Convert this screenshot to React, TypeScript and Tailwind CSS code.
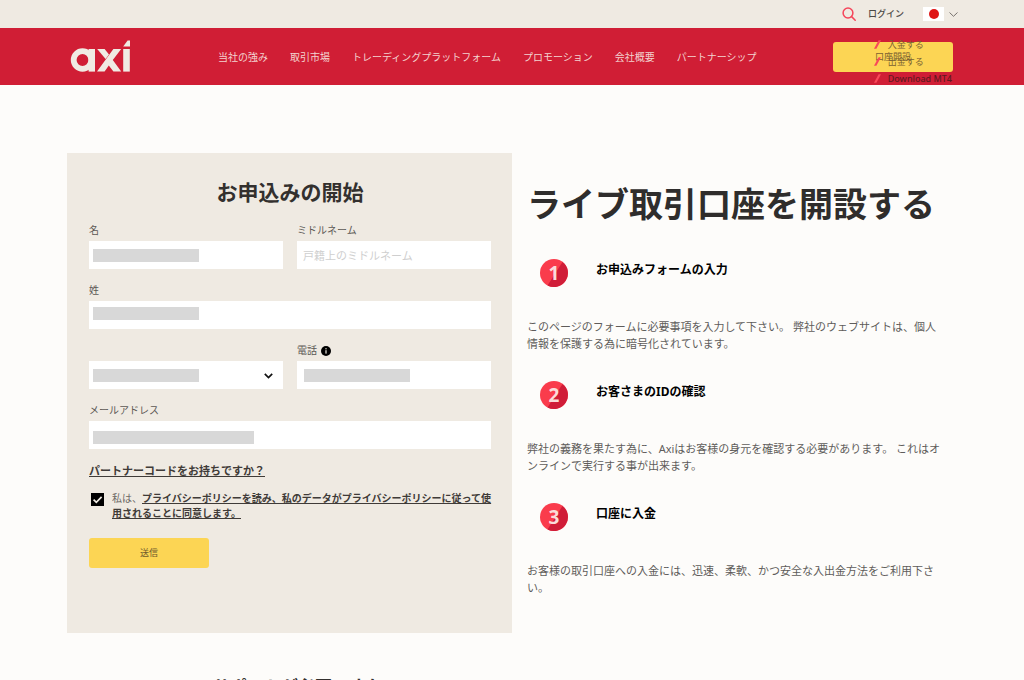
import { useState } from 'react'
import type { ReactNode } from 'react'

interface Step {
  no: number
  title: string
  lines: string[]
}

const NAV_ITEMS = [
  '当社の強み',
  '取引市場',
  'トレーディングプラットフォーム',
  'プロモーション',
  '会社概要',
  'パートナーシップ',
]

const QUICK_LINKS = ['入金する', '出金する', 'Download MT4']

const STEPS: Step[] = [
  {
    no: 1,
    title: 'お申込みフォームの入力',
    lines: [
      'このページのフォームに必要事項を入力して下さい。 弊社のウェブサイトは、個人',
      '情報を保護する為に暗号化されています。',
    ],
  },
  {
    no: 2,
    title: 'お客さまのIDの確認',
    lines: [
      '弊社の義務を果たす為に、Axiはお客様の身元を確認する必要があります。 これはオ',
      'ンラインで実行する事が出来ます。',
    ],
  },
  {
    no: 3,
    title: '口座に入金',
    lines: ['お客様の取引口座への入金には、迅速、柔軟、かつ安全な入出金方法をご利用下さ', 'い。'],
  },
]

const INPUT_CLASS =
  'block h-7 w-full rounded-none border-0 bg-white px-[6px] text-[11px] text-[#333] outline-none placeholder:text-[#cfcfcf]'

function Logo() {
  return (
    <svg className="block h-[33px] w-[61px]" viewBox="0 0 61 33" fill="#f0ebe3" aria-label="axi" role="img">
      <circle cx="12.5" cy="20" r="8.8" fill="none" stroke="#f0ebe3" strokeWidth="5.8" />
      <rect x="18.6" y="9" width="6.4" height="22.6" />
      <polygon points="27.2,9 34.6,9 39,14.6 35.6,19" />
      <polygon points="43.4,9 51.2,9 42.8,20 51.2,31.6 43.4,31.6 38.8,25.4 34.6,31.6 27,31.6" />
      <rect x="53.2" y="9" width="6.6" height="22.6" />
      <polygon points="57.6,0.4 60,0.4 60,6.6 53.2,6.6" />
    </svg>
  )
}

function TopBar() {
  return (
    <div className="flex h-7 items-center justify-end bg-[#efeae2] pr-[66px]">
      <button type="button" aria-label="検索">
        <svg className="block size-[14px]" viewBox="0 0 14 14" fill="none" stroke="#f5455a" strokeWidth="1.5" strokeLinecap="round">
          <circle cx="6" cy="6" r="4.9" />
          <path d="M9.6 9.6 13.2 13.2" />
        </svg>
      </button>
      <a href="#login" className="ml-3 text-[9px] font-medium text-[#4a4744]">
        ログイン
      </a>
      <button type="button" aria-label="日本語" className="ml-[19px] flex items-center gap-[5px]">
        <span className="flex h-[14px] w-[21px] items-center justify-center bg-white">
          <span className="size-[10px] rounded-full bg-[#df1414]" />
        </span>
        <svg className="block h-[5px] w-[9px]" viewBox="0 0 9 5" fill="none" stroke="#77736f" strokeWidth="1">
          <path d="M0.5 0.5 4.5 4.3 8.5 0.5" />
        </svg>
      </button>
    </div>
  )
}

function Header() {
  return (
    <header className="relative flex h-[57px] items-center bg-[#d01e35] pr-[71px] pl-[70px]">
      <a href="#top">
        <Logo />
      </a>
      <nav className="ml-[87px] flex gap-[22px] pt-px text-[10px] whitespace-nowrap text-[#f3d3d0]">
        {NAV_ITEMS.map(item => (
          <a key={item} href="#nav">
            {item}
          </a>
        ))}
      </nav>
      <button type="button" className="ml-auto h-[30px] w-[120px] rounded-[3px] bg-[#fcd554] text-[9px] text-[#7a5f31]">
        口座開設
      </button>

      {/* ボタンに重なるリンク一覧 */}
      <ul className="absolute top-2 right-[72px] text-[9px] leading-[17px]">
        {QUICK_LINKS.map(link => (
          <li key={link} className="flex items-center gap-[7px]">
            <svg className="block h-[9px] w-[7px]" viewBox="0 0 7 9" fill="#f9485a">
              <polygon points="4.6,0.3 7,0.3 2.4,8.7 0,8.7" />
            </svg>
            <a
              href="#quick"
              className={link === 'Download MT4' ? 'font-medium text-[#5f1a20]' : 'text-[#7a5f31]'}
            >
              {link}
            </a>
          </li>
        ))}
      </ul>
    </header>
  )
}

interface FieldProps {
  id: string
  label: ReactNode
  mask?: string
  children: ReactNode
}

function Field({ id, label, mask, children }: FieldProps) {
  return (
    <div className="min-w-0 flex-1">
      <label htmlFor={id} className="flex h-[21px] items-center gap-1 text-[10px] text-[#5c5855]">
        {label}
      </label>
      <div className="relative">
        {children}
        {mask && <span className={`pointer-events-none absolute h-[13px] bg-[#d8d8d8] ${mask}`} />}
      </div>
    </div>
  )
}

function InfoIcon() {
  return (
    <svg className="block size-[10px]" viewBox="0 0 10 10">
      <circle cx="5" cy="5" r="5" fill="#000" />
      <rect x="4.4" y="4.2" width="1.2" height="3.4" fill="#efeae2" />
      <circle cx="5" cy="2.8" r="0.7" fill="#efeae2" />
    </svg>
  )
}

function ApplyForm() {
  const [agreed, setAgreed] = useState(true)

  return (
    <form className="bg-[#efeae2] pt-6 pr-[21px] pb-[65px] pl-[22px]" onSubmit={e => e.preventDefault()}>
      <h2 className="mb-[13px] text-center text-[21px] leading-[30px] font-bold text-[#33302e]">お申込みの開始</h2>

      <div className="flex flex-col gap-[11px]">
        <div className="flex gap-[14px]">
          <Field id="first" label="名" mask="left-1 top-2 w-[106px]">
            <input id="first" type="text" className={INPUT_CLASS} />
          </Field>
          <Field id="middle" label="ミドルネーム">
            <input id="middle" type="text" placeholder="戸籍上のミドルネーム" className={INPUT_CLASS} />
          </Field>
        </div>
        <Field id="last" label="姓" mask="left-1 top-[6px] w-[106px]">
          <input id="last" type="text" className={INPUT_CLASS} />
        </Field>
        <div className="flex gap-[14px]">
          <Field id="country" label="" mask="left-1 top-2 w-[106px]">
            <select id="country" aria-label="国" className={`${INPUT_CLASS} appearance-none`} />
            <svg
              className="pointer-events-none absolute top-3 right-[10px] h-[6px] w-[9px]"
              viewBox="0 0 9 6"
              fill="none"
              stroke="#111"
              strokeWidth="1.7"
            >
              <path d="M0.8 0.8 4.5 4.5 8.2 0.8" />
            </svg>
          </Field>
          <Field
            id="phone"
            label={
              <>
                電話
                <InfoIcon />
              </>
            }
            mask="left-[7px] top-2 w-[106px]"
          >
            <input id="phone" type="tel" className={INPUT_CLASS} />
          </Field>
        </div>
        <Field id="email" label="メールアドレス" mask="left-1 top-[10px] w-[161px]">
          <input id="email" type="email" className={INPUT_CLASS} />
        </Field>
      </div>

      <a href="#partner" className="mt-3 block text-[11px] leading-5 font-bold text-[#3f3b38] underline">
        パートナーコードをお持ちですか？
      </a>

      <div className="mt-[10px] -mr-1 flex items-start gap-2 pl-[2px]">
        <span className="relative mt-[2px] block size-[13px] shrink-0">
          <input
            id="agree"
            type="checkbox"
            checked={agreed}
            onChange={e => setAgreed(e.target.checked)}
            className="block size-[13px] appearance-none bg-black"
          />
          {agreed && (
            <svg
              className="pointer-events-none absolute inset-0 size-[13px]"
              viewBox="0 0 13 13"
              fill="none"
              stroke="#efeae2"
              strokeWidth="1.7"
            >
              <path d="M2.6 6.6 5.3 9.3 10.6 3.8" />
            </svg>
          )}
        </span>
        <label htmlFor="agree" className="text-[10px] leading-[15px] whitespace-nowrap text-[#6b6764]">
          私は、
          <a href="#privacy" className="font-bold text-[#3f3b38] underline">
            プライバシーポリシーを読み、私のデータがプライバシーポリシーに従って使
            <br />
            用されることに同意します。
          </a>
        </label>
      </div>

      <button type="submit" className="mt-[17px] block h-[30px] w-[120px] rounded-[3px] bg-[#fcd554] text-[9px] text-[#6f5a2c]">
        送信
      </button>
    </form>
  )
}

function StepBadge({ no }: { no: number }) {
  return (
    <svg className="block size-7 shrink-0" viewBox="0 0 28 28">
      <circle cx="14" cy="14" r="14" fill="#fa3c4c" />
      <path d="M22.5 2.9A14 14 0 0 1 7.5 26.4Z" fill="#d01d38" />
      <text x="14" y="21" textAnchor="middle" fontSize="19" fontWeight="700" fill="#fadcda" className="font-['Open_Sans',sans-serif]">
        {no}
      </text>
    </svg>
  )
}

function Steps() {
  return (
    <section className="pt-[31px] pl-[15px]">
      <h1 className="text-[34px] leading-10 font-bold whitespace-nowrap text-[#2f2d2c]">ライブ取引口座を開設する</h1>
      <ol className="mt-[35px] flex flex-col gap-[29px]">
        {STEPS.map(step => (
          <li key={step.no}>
            <div className="flex items-start gap-7 pl-[13px]">
              <StepBadge no={step.no} />
              <h3 className="text-[12px] leading-[22px] font-bold text-black">{step.title}</h3>
            </div>
            <p className="mt-[31px] text-[11px] leading-[17px] whitespace-nowrap text-[#5f5c5a]">
              {step.lines[0]}
              <br />
              {step.lines[1]}
            </p>
          </li>
        ))}
      </ol>
    </section>
  )
}

export default function App() {
  return (
    <div className="min-h-screen bg-[#fdfcfa] font-['Noto_Sans','Noto_Sans_CJK_JP',sans-serif]">
      <TopBar />
      <Header />
      <main className="px-[67px] pt-[68px]">
        <div className="grid grid-cols-2">
          <ApplyForm />
          <Steps />
        </div>
        <h2 className="mt-[42px] pl-[146px] text-[17px] leading-6 font-bold text-[#33302e]">サポートが必要ですか？</h2>
      </main>
    </div>
  )
}
